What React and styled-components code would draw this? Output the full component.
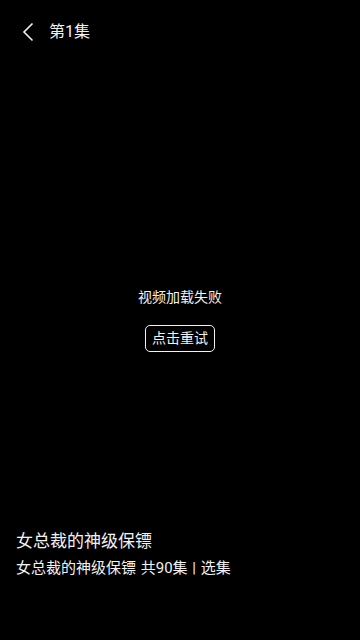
import React from "react";
import styled, { createGlobalStyle } from "styled-components";

const Global = createGlobalStyle`
  html, body { margin: 0; padding: 0; background: #000; }
  body { font-family: Roboto, "Noto Sans CJK SC", sans-serif; }
`;

const Screen = styled.div`
  position: relative;
  width: 360px;
  height: 640px;
  background: #000;
  color: #f2f2f2;
  overflow: hidden;
`;

const Player = styled.div`
  height: 100%;
  display: flex;
  flex-direction: column;
  align-items: center;
  justify-content: center;
  gap: 18px;
  padding-bottom: 2px;
  box-sizing: border-box;
`;

const ErrorText = styled.div`
  font-size: 14px;
  line-height: 20px;
`;

const RetryButton = styled.button`
  font-family: inherit;
  font-size: 14px;
  line-height: 20px;
  color: #f2f2f2;
  background: transparent;
  border: 1px solid #f2f2f2;
  border-radius: 5px;
  padding: 2px 6px 3px;
  cursor: pointer;
`;

const Header = styled.div`
  position: absolute;
  top: 0;
  left: 0;
  right: 0;
  height: 63px;
  display: flex;
  align-items: center;
  padding: 0 0 0 22px;
  gap: 15px;
  box-sizing: border-box;
`;

const BackIcon = styled.svg`
  width: 12px;
  height: 20px;
  display: block;
`;

const Title = styled.div`
  font-size: 16px;
  line-height: 22px;
`;

const Footer = styled.div`
  position: absolute;
  left: 0;
  right: 0;
  bottom: 61px;
  padding: 0 16px;
  display: flex;
  flex-direction: column;
  gap: 4px;
`;

const DramaName = styled.div`
  font-size: 17px;
  line-height: 24px;
`;

const EpisodeLine = styled.div`
  font-size: 15px;
  line-height: 22px;
  word-spacing: 1px;
`;

export default function App() {
  return (
    <>
      <Global />
      <Screen>
        <Player>
          <ErrorText>视频加载失败</ErrorText>
          <RetryButton>点击重试</RetryButton>
        </Player>
        <Header>
          <BackIcon viewBox="0 0 12 20">
            <polyline points="10.5,1.5 2,10 10.5,18.5" fill="none" stroke="#f2f2f2" strokeWidth="1.6" />
          </BackIcon>
          <Title>第1集</Title>
        </Header>
        <Footer>
          <DramaName>女总裁的神级保镖</DramaName>
          <EpisodeLine>女总裁的神级保镖 共90集 | 选集</EpisodeLine>
        </Footer>
      </Screen>
    </>
  );
}
